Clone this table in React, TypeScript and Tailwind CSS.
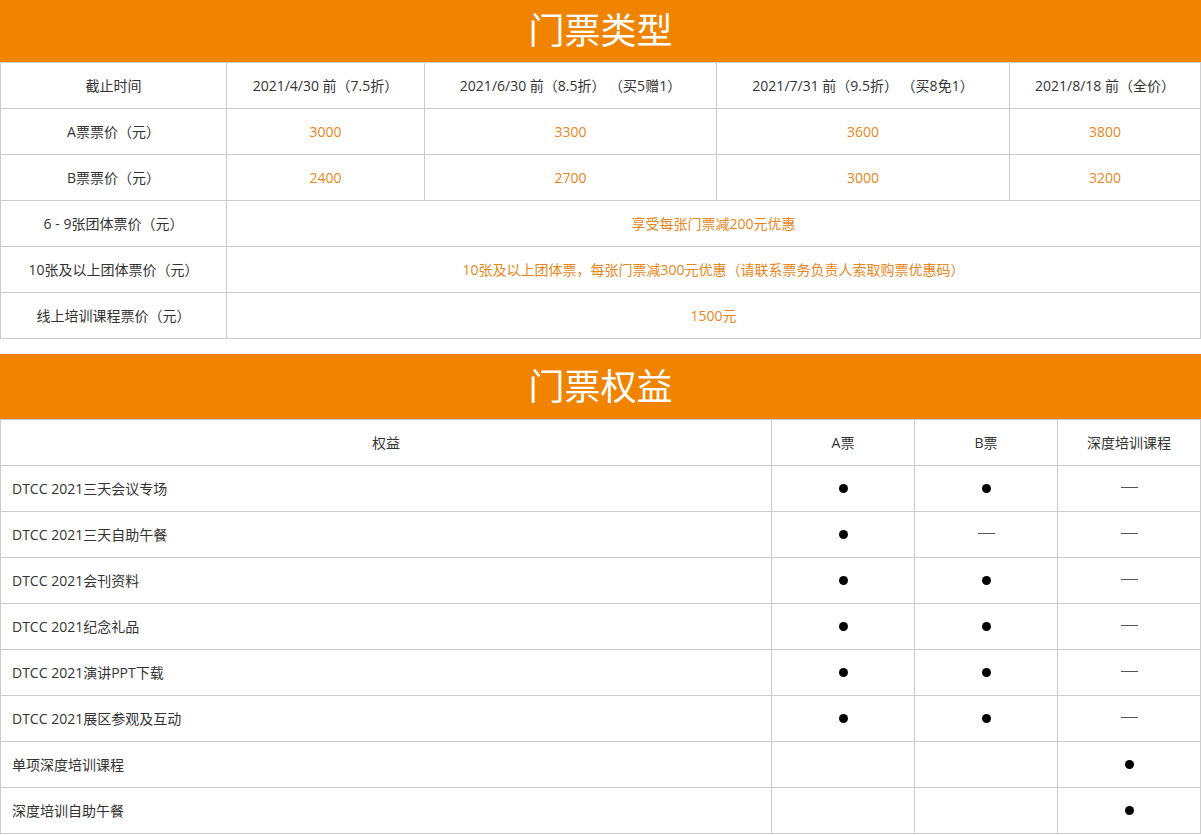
import type { ReactNode } from "react";

const font = { fontFamily: '"Open Sans", "Noto Sans CJK SC", sans-serif' };

function Banner({ title, tall }: { title: string; tall?: boolean }) {
  return (
    <div
      className={`flex items-center justify-center bg-[#f08300] text-[36px] leading-none text-white ${
        tall ? "h-[65px]" : "h-[62px]"
      }`}
    >
      {title}
    </div>
  );
}

function Td({ children, className = "", colSpan }: { children?: ReactNode; className?: string; colSpan?: number }) {
  return (
    <td colSpan={colSpan} className={`h-[46px] border border-[#cccccc] px-2 text-center text-[14px] ${className}`}>
      {children}
    </td>
  );
}

const price = "text-[#e8861a]";

const dot = <span className="inline-block h-[9px] w-[9px] -translate-y-[2px] rounded-full bg-black align-middle" />;
const dash = <span className="inline-block h-px w-[17px] -translate-y-[3px] bg-[#555] align-middle" />;

const perks: [string, ReactNode, ReactNode, ReactNode][] = [
  ["DTCC 2021三天会议专场", dot, dot, dash],
  ["DTCC 2021三天自助午餐", dot, dash, dash],
  ["DTCC 2021会刊资料", dot, dot, dash],
  ["DTCC 2021纪念礼品", dot, dot, dash],
  ["DTCC 2021演讲PPT下载", dot, dot, dash],
  ["DTCC 2021展区参观及互动", dot, dot, dash],
  ["单项深度培训课程", null, null, dot],
  ["深度培训自助午餐", null, null, dot],
];

export default function App() {
  return (
    <div className="w-[1201px] bg-white text-[#333]" style={font}>
      <Banner title="门票类型" />
      <table className="w-full table-fixed border-collapse">
        <colgroup>
          <col className="w-[226px]" />
          <col className="w-[198px]" />
          <col className="w-[292px]" />
          <col className="w-[293px]" />
          <col />
        </colgroup>
        <tbody>
          <tr>
            <Td>截止时间</Td>
            <Td>2021/4/30 前（7.5折）</Td>
            <Td>2021/6/30 前（8.5折） （买5赠1）</Td>
            <Td>2021/7/31 前（9.5折） （买8免1）</Td>
            <Td>2021/8/18 前（全价）</Td>
          </tr>
          <tr>
            <Td>A票票价（元）</Td>
            <Td className={price}>3000</Td>
            <Td className={price}>3300</Td>
            <Td className={price}>3600</Td>
            <Td className={price}>3800</Td>
          </tr>
          <tr>
            <Td>B票票价（元）</Td>
            <Td className={price}>2400</Td>
            <Td className={price}>2700</Td>
            <Td className={price}>3000</Td>
            <Td className={price}>3200</Td>
          </tr>
          <tr>
            <Td>6 - 9张团体票价（元）</Td>
            <Td colSpan={4} className={price}>享受每张门票减200元优惠</Td>
          </tr>
          <tr>
            <Td>10张及以上团体票价（元）</Td>
            <Td colSpan={4} className={price}>
              10张及以上团体票，每张门票减300元优惠（请联系票务负责人索取购票优惠码）
            </Td>
          </tr>
          <tr>
            <Td>线上培训课程票价（元）</Td>
            <Td colSpan={4} className={price}>1500元</Td>
          </tr>
        </tbody>
      </table>

      <div className="h-[15px]" />

      <Banner title="门票权益" tall />
      <table className="w-full table-fixed border-collapse">
        <colgroup>
          <col className="w-[771px]" />
          <col className="w-[143px]" />
          <col className="w-[143px]" />
          <col />
        </colgroup>
        <tbody>
          <tr>
            <Td>权益</Td>
            <Td>A票</Td>
            <Td>B票</Td>
            <Td>深度培训课程</Td>
          </tr>
          {perks.map(([name, a, b, c]) => (
            <tr key={name}>
              <Td className="!px-[11px] !text-left">{name}</Td>
              <Td>{a}</Td>
              <Td>{b}</Td>
              <Td>{c}</Td>
            </tr>
          ))}
        </tbody>
      </table>
    </div>
  );
}
